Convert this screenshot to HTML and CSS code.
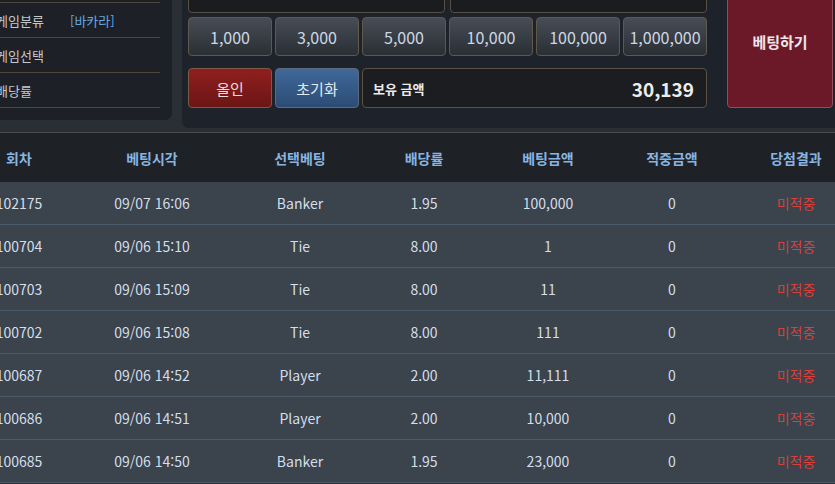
FILE: index.html
```html
<!DOCTYPE html>
<html lang="ko">
<head>
  <meta charset="UTF-8" />
  <title>베팅 내역</title>
  <link rel="stylesheet" href="styles.css">
</head>
<body>

  <!-- 상단: 게임 정보 + 베팅 패널 -->
  <div class="top">
    <div class="info-panel">
      <div class="info-row"><span class="info-label">게임회차</span><span class="info-value"></span></div>
      <div class="info-row"><span class="info-label">게임분류</span><span class="info-value">[바카라]</span></div>
      <div class="info-row"><span class="info-label">게임선택</span><span class="info-value"></span></div>
      <div class="info-row"><span class="info-label">배당률</span><span class="info-value"></span></div>
    </div>

    <div class="bet-panel">
      <div class="bet-main">
        <div class="bet-inputs">
          <div class="input-box"></div>
          <div class="input-box"></div>
        </div>
        <div class="chips">
          <button class="chip">1,000</button>
          <button class="chip">3,000</button>
          <button class="chip">5,000</button>
          <button class="chip">10,000</button>
          <button class="chip">100,000</button>
          <button class="chip">1,000,000</button>
        </div>
        <div class="actions">
          <button class="btn-allin">올인</button>
          <button class="btn-reset">초기화</button>
          <div class="balance">
            <span class="balance-label">보유 금액</span>
            <span class="balance-value">30,139</span>
          </div>
        </div>
      </div>
      <button class="bet-btn">베팅하기</button>
    </div>
  </div>

  <div class="divider"></div>

  <!-- 베팅 내역 -->
  <table class="history">
    <colgroup>
      <col class="c-round"><col class="c-time"><col><col><col><col><col>
    </colgroup>
    <thead>
      <tr>
        <th>회차</th><th>베팅시각</th><th>선택베팅</th><th>배당률</th><th>베팅금액</th><th>적중금액</th><th>당첨결과</th>
      </tr>
    </thead>
    <tbody>
      <tr><td>102175</td><td>09/07 16:06</td><td>Banker</td><td>1.95</td><td>100,000</td><td>0</td><td class="result">미적중</td></tr>
      <tr><td>100704</td><td>09/06 15:10</td><td>Tie</td><td>8.00</td><td>1</td><td>0</td><td class="result">미적중</td></tr>
      <tr><td>100703</td><td>09/06 15:09</td><td>Tie</td><td>8.00</td><td>11</td><td>0</td><td class="result">미적중</td></tr>
      <tr><td>100702</td><td>09/06 15:08</td><td>Tie</td><td>8.00</td><td>111</td><td>0</td><td class="result">미적중</td></tr>
      <tr><td>100687</td><td>09/06 14:52</td><td>Player</td><td>2.00</td><td>11,111</td><td>0</td><td class="result">미적중</td></tr>
      <tr><td>100686</td><td>09/06 14:51</td><td>Player</td><td>2.00</td><td>10,000</td><td>0</td><td class="result">미적중</td></tr>
      <tr><td>100685</td><td>09/06 14:50</td><td>Banker</td><td>1.95</td><td>23,000</td><td>0</td><td class="result">미적중</td></tr>
    </tbody>
  </table>

</body>
</html>
```

FILE: styles.css
```css
body {
  margin: 0;
  overflow: hidden;
  background: #2a2e35;
  font-family: "Noto Sans CJK KR", "Noto Sans", sans-serif;
  color: #d2dde8;
}
button {
  font-family: inherit;
  cursor: pointer;
}

/* top area */
.top {
  display: flex;
  gap: 10px;
  margin-top: -32px;
}
.info-panel {
  width: 194px;
  margin-left: -22px;
  padding: 0 12px 12px 22px;
  box-sizing: border-box;
  flex: none;
  align-self: flex-start;
  background: #1d2027;
  border-radius: 0 0 7px 0;
}
.info-row {
  display: flex;
  align-items: center;
  height: 35px;
  box-sizing: border-box;
  border-bottom: 1px solid #4d4639;
  font-size: 13px;
}
.info-label {
  width: 74px;
  margin-left: -4px;
  color: #c6c8cc;
}
.info-value {
  color: #62a8e0;
}

.bet-panel {
  flex: 1;
  display: flex;
  gap: 20px;
  padding: 6px 2px 20px 6px;
  background: #1e222a;
  border-radius: 0 0 0 7px;
}
.bet-main {
  width: 519px;
  display: flex;
  flex-direction: column;
}
.bet-inputs {
  display: flex;
  gap: 5px;
  height: 39px;
}
.input-box {
  flex: 1;
  background: #1b1c20;
  border: 1px solid #565041;
  border-radius: 4px;
}
.chips {
  display: grid;
  grid-template-columns: repeat(6, 1fr);
  gap: 3px;
  margin-top: 4px;
  height: 39px;
}
.chip {
  background: linear-gradient(#464d56, #2a2f35);
  border: 1px solid #5e594c;
  border-radius: 4px;
  color: #cdd7e2;
  font-size: 16px;
  padding: 0;
}
.actions {
  display: flex;
  gap: 3px;
  margin-top: 12px;
  height: 40px;
}
.btn-allin,
.btn-reset {
  width: 84px;
  flex: none;
  border-radius: 4px;
  font-size: 15px;
  padding: 0;
}
.btn-allin {
  background: linear-gradient(#901f1f, #6c1515);
  border: 1px solid #7d5a45;
  color: #ecdcdc;
}
.btn-reset {
  background: linear-gradient(#41689a, #2b4c74);
  border: 1px solid #5a6a7c;
  color: #e2eaf2;
}
.balance {
  flex: 1;
  display: flex;
  align-items: center;
  justify-content: space-between;
  padding: 0 12px 0 10px;
  background: #1c1d21;
  border: 1px solid #5a5244;
  border-radius: 4px;
  color: #ececec;
  font-weight: bold;
}
.balance-label {
  font-size: 13px;
}
.balance-value {
  font-size: 19px;
}
.bet-btn {
  width: 106px;
  flex: none;
  background: #6b1929;
  border: 1px solid #87525c;
  border-radius: 4px;
  color: #f0e6e8;
  font-size: 15px;
  font-weight: bold;
  padding: 0;
}

.divider {
  margin-top: 4px;
  height: 1px;
  background: #4b4b4a;
}

/* history table */
.history {
  margin-left: -28px;
  width: 886px;
  border-collapse: collapse;
  table-layout: fixed;
  font-size: 14px;
}
.history col { width: 124px; }
.history col.c-round { width: 94px; }
.history col.c-time { width: 172px; }
.history th {
  height: 49px;
  padding: 0;
  background: #1e2126;
  color: #88b4e2;
  font-weight: bold;
}
.history td {
  height: 42px;
  padding: 0;
  text-align: center;
  background: #3b434d;
  border-bottom: 1px solid #4b5a68;
  color: #d4dfea;
}
.history td.result {
  color: #d8403a;
}
```
